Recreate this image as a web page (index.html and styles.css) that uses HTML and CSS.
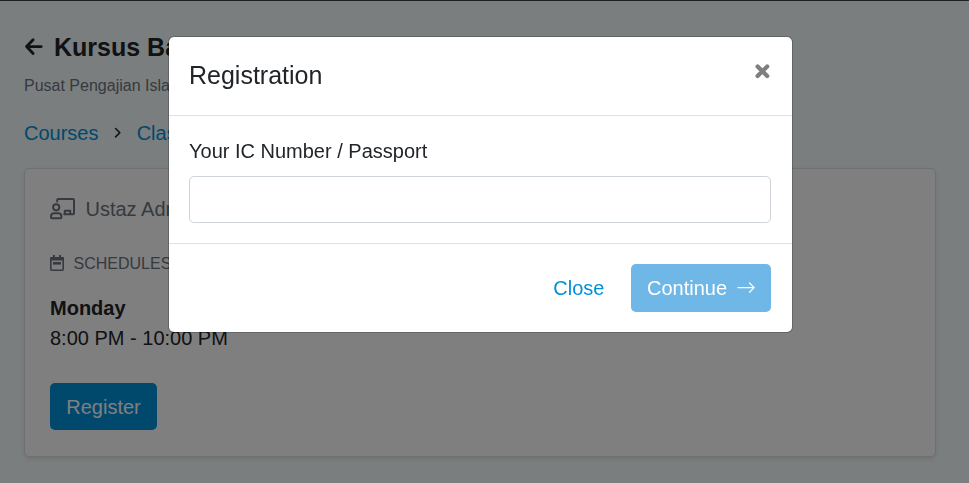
FILE: index.html
```html
<!DOCTYPE html>
<html lang="ms">
<head>
<meta charset="utf-8">
<title>Registration</title>
<link rel="stylesheet" href="styles.css">
</head>
<body>
<main class="page">
  <h1 class="page-title">
    <svg class="icon-back" viewBox="0 0 19 19" fill="none" stroke="currentColor" stroke-width="2.9" stroke-linecap="round" stroke-linejoin="round"><path d="M9.1 2.7 2.6 9.6l6.5 6.9M3 9.6h14.2"/></svg>
    <span>Kursus Bahasa</span>
  </h1>
  <p class="subtitle">Pusat Pengajian Islam</p>
  <nav class="crumbs">
    <a>Courses</a>
    <svg class="icon-chevron" viewBox="0 0 8 12" fill="none" stroke="currentColor" stroke-width="1.6" stroke-linecap="round" stroke-linejoin="round"><path d="m1.6 1.5 4.2 4.2-4.2 4.2"/></svg>
    <a>Classes</a>
  </nav>
  <section class="card">
    <div class="teacher">
      <svg class="icon-teacher" viewBox="0 0 25 22" fill="none" stroke="currentColor" stroke-width="2" stroke-linejoin="round" stroke-linecap="round"><path d="M7.2 3.5V2Q7.2 1 8.2 1H23q1 0 1 1v13.2q0 1-1 1h-8.8"/><path d="M14.8 15.8v-3h5.5v3"/><circle cx="6.2" cy="9.3" r="3.1"/><path d="M4.2 15.2h4q3.2 0 3.2 3.2v.8q0 1-1 1H2q-1 0-1-1v-.8q0-3.2 3.2-3.2z"/></svg>
      <span>Ustaz Adnan</span>
    </div>
    <div class="schedules">
      <svg class="icon-calendar" viewBox="0 0 14 16" fill="none" stroke="currentColor"><path d="M3.9 0v3M10.1 0v3" stroke-width="2"/><path d="M0 5.6V3.4Q0 2 1.4 2h11.2Q14 2 14 3.4v2.2z" fill="currentColor" stroke="none"/><rect x=".8" y="2.8" width="12.4" height="12.4" rx="1" stroke-width="1.6"/><path d="M3 8.3h8" stroke-width="2.6"/></svg>
      <span>SCHEDULES</span>
    </div>
    <div class="day">Monday</div>
    <div>8:00 PM - 10:00 PM</div>
    <button class="btn btn-register">Register</button>
  </section>
</main>
<div class="backdrop">
  <div class="modal" role="dialog">
    <header class="modal-header">
      <h2>Registration</h2>
      <svg class="icon-close" viewBox="0 0 16 16" stroke="currentColor" stroke-width="4.2" stroke-linecap="round"><path d="m3.6 3.4 9.6 9.6M13.2 3.4 3.6 13"/></svg>
    </header>
    <div class="modal-body">
      <label for="ic">Your IC Number / Passport</label>
      <input id="ic" type="text">
    </div>
    <footer class="modal-footer">
      <button class="btn btn-link">Close</button>
      <button class="btn btn-continue">Continue
        <svg class="icon-next" viewBox="0 0 18 12" fill="none" stroke="currentColor" stroke-width="1.25" stroke-linecap="round" stroke-linejoin="round"><path d="M1 5.6h16.2M12.5 1l4.7 4.6-4.7 4.6"/></svg>
      </button>
    </footer>
  </div>
</div>
</body>
</html>
```
FILE: styles.css
```css
* { box-sizing: border-box; }
body {
  margin: 0;
  height: 483px;
  overflow: hidden;
  background: #f5fdfe;
  color: #212529;
  font: 20px/30px "Liberation Sans", Arial, sans-serif;
}
h1, h2, p { margin: 0; }
svg { display: block; flex: none; }
.page {
  border-top: 1px solid #40404a;
  padding: 31px 33px 26px 24px;
}
.page-title {
  display: flex;
  align-items: center;
  gap: 11px;
  font-size: 25px;
  line-height: 30px;
}
.icon-back { width: 19px; height: 19px; margin-top: -2px; }
.subtitle {
  margin-top: 12px;
  font-size: 16px;
  line-height: 24px;
  color: #6c757d;
}
.crumbs {
  display: flex;
  align-items: center;
  margin-top: 20px;
  color: #212529;
}
.crumbs a { color: #0090d9; }
.icon-chevron { width: 8px; height: 12px; margin: 0 14.5px 0 15.7px; }
.card {
  height: 289px;
  margin-top: 20px;
  padding: 25px;
  border: 1px solid #dfdfdf;
  border-radius: 5px;
  background: #fff;
  box-shadow: 0 2px 5px rgba(0, 0, 0, .1);
}
.teacher, .schedules {
  display: flex;
  align-items: center;
  gap: 10.5px;
  color: #6c757d;
}
.icon-teacher { width: 25px; height: 22px; }
.schedules {
  gap: 9.5px;
  margin: 28px 0 17px;
  font-size: 16px;
  line-height: 24px;
}
.icon-calendar { width: 14px; height: 16px; margin-top: -2px; }
.day { font-weight: bold; }
.btn {
  border: 0;
  border-radius: 5px;
  padding: 0 16px;
  font: inherit;
  color: #fff;
}
.btn-register {
  display: block;
  width: 107px;
  height: 47px;
  margin-top: 30px;
  background: #0090d9;
}
.backdrop {
  position: fixed;
  inset: 0;
  padding-top: 36px;
  background: rgba(0, 0, 0, .5);
}
.modal {
  width: 625px;
  height: 297px;
  margin-left: 168px;
  border: 1px solid rgba(0, 0, 0, .2);
  border-radius: 6px;
  background: #fff;
  background-clip: padding-box;
}
.modal-header {
  display: flex;
  align-items: flex-start;
  justify-content: space-between;
  height: 79px;
  padding: 20px;
  border-bottom: 1px solid #dee2e6;
}
.modal-header h2 {
  font-size: 25px;
  font-weight: normal;
  line-height: 37px;
}
.icon-close {
  width: 16px;
  height: 16px;
  margin: 6px 2px 0 0;
  color: #7f7f7f;
}
.modal-body { padding: 20px; height: 127px; }
.modal-body label { display: block; margin-bottom: 10px; }
.modal-body input {
  display: block;
  width: 582px;
  height: 47px;
  border: 1px solid #ced4da;
  border-radius: 5px;
  background: #fff;
}
.modal-footer {
  display: flex;
  justify-content: flex-end;
  gap: 10.5px;
  padding: 20px 21px 20px 20px;
  border-top: 1px solid #dee2e6;
}
.btn-link { background: none; color: #0090d9; }
.btn-continue {
  display: flex;
  align-items: center;
  gap: 10px;
  width: 140px;
  height: 48px;
  padding-right: 0;
  background: #6fb7e6;
}
.icon-next { width: 18px; height: 12px; }
```
